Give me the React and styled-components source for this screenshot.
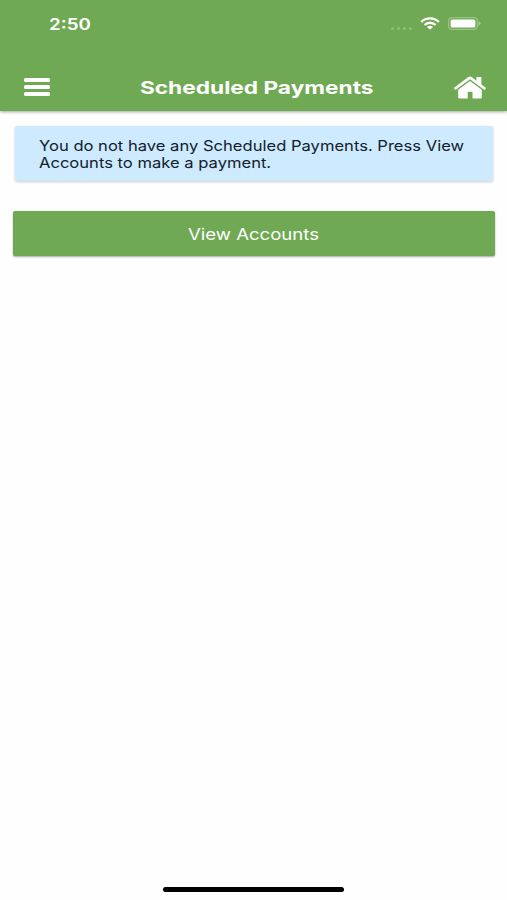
import React from 'react';
import styled, { createGlobalStyle } from 'styled-components';

const GlobalStyle = createGlobalStyle`
  * {
    box-sizing: border-box;
  }

  body {
    margin: 0;
    background: #fefefe;
    font-family: Inter, "Liberation Sans", sans-serif;
  }
`;

const App = () => (
  <Screen>
    <GlobalStyle />
    <Header>
      <StatusBar>
        <Time>
          <Wide $scale={1.17}>2:50</Wide>
        </Time>
        <StatusIcons>
          <Dots>
            <Dot />
            <Dot />
            <Dot />
            <Dot />
          </Dots>
          <WifiIcon />
          <BatteryIcon />
        </StatusIcons>
      </StatusBar>
      <Toolbar>
        <MenuButton type="button" aria-label="Menu">
          <MenuLine />
          <MenuLine />
          <MenuLine />
        </MenuButton>
        <Title>
          <Wide $scale={1.26} $origin="center">Scheduled Payments</Wide>
        </Title>
        <HomeButton type="button" aria-label="Home">
          <HomeIcon />
        </HomeButton>
      </Toolbar>
    </Header>
    <Content>
      <Notice>
        <Wide $scale={1.143}>
          You do not have any Scheduled Payments. Press View
          <br />
          Accounts to make a payment.
        </Wide>
      </Notice>
      <PrimaryButton type="button">
        <Wide $scale={1.16} $origin="center">View Accounts</Wide>
      </PrimaryButton>
    </Content>
    <HomeIndicator />
  </Screen>
);

const WifiIcon = () => (
  <svg width="20" height="13" viewBox="0 0 20 13" fill="none" stroke="#fff" strokeWidth="2.4">
    <path d="M1.2 5 C6 0.2 14 0.2 18.8 5" />
    <path d="M4.5 8 C7.6 5 12.4 5 15.5 8" />
    <path d="M10 12.6 L6.9 9.9 C8.6 8.4 11.4 8.4 13.1 9.9 Z" fill="#fff" stroke="none" />
  </svg>
);

const BatteryIcon = () => (
  <svg width="33" height="13" viewBox="0 0 33 13">
    <rect x="0.6" y="0.6" width="28.8" height="11.8" rx="3.4" fill="none" stroke="#fff" strokeOpacity="0.3" strokeWidth="1.2" />
    <rect x="2.6" y="2.4" width="24.8" height="8.2" rx="1.6" fill="#fff" />
    <path d="M30.6 4.3 Q32.6 5.2 32.6 6.5 Q32.6 7.8 30.6 8.7 Z" fill="#fff" fillOpacity="0.4" />
  </svg>
);

const HomeIcon = () => (
  <svg width="34" height="24" viewBox="0 0 34 24" fill="#fff">
    <path d="M0.8 12.1 L15.3 1.1 Q17 0 18.7 1.1 L23.4 4.7 V1 H28.4 V8.5 L33.2 12.1 L31.5 14 L17 3.3 L2.5 14 Z" />
    <path d="M17 5.1 L28.8 13.8 V21.2 Q28.8 22.5 27.5 22.5 H19.5 V15.8 H14.7 V22.5 H6.5 Q5.2 22.5 5.2 21.2 V13.8 Z" />
  </svg>
);

export default App;

const Screen = styled.main`
  display: flex;
  flex-direction: column;
  width: 507px;
  height: 900px;
  overflow: hidden;
`;

// Letters are drawn wider than Inter's own shapes
const Wide = styled.span`
  display: inline-block;
  white-space: nowrap;
  transform: scaleX(${({ $scale }) => $scale});
  transform-origin: ${({ $origin }) => $origin || 'left'};
`;

const Header = styled.header`
  height: 111px;
  background: #70a953;
  color: #fff;
  box-shadow: 0 1px 3px rgba(0, 0, 0, 0.35);
`;

const StatusBar = styled.div`
  display: flex;
  justify-content: space-between;
  height: 64px;
  padding: 14px 26px 0 49px;
`;

const Time = styled.div`
  font-size: 16px;
  font-weight: 600;
  line-height: 20px;
`;

const StatusIcons = styled.div`
  display: flex;
  align-items: center;
  gap: 8px;
  height: 19px;
`;

const Dots = styled.div`
  display: flex;
  gap: 3px;
  padding-top: 9px;
`;

const Dot = styled.span`
  width: 3px;
  height: 3px;
  border-radius: 50%;
  background: rgba(255, 255, 255, 0.22);
`;

const Toolbar = styled.div`
  display: grid;
  grid-template-columns: 60px 1fr 60px;
  align-items: center;
  height: 47px;
`;

const IconButton = styled.button`
  display: flex;
  padding: 0;
  border: 0;
  background: none;
`;

const MenuButton = styled(IconButton)`
  flex-direction: column;
  gap: 3px;
  margin: 0 0 1px 24px;
  width: 26px;
`;

const MenuLine = styled.span`
  width: 100%;
  height: 4px;
  border-radius: 1.5px;
  background: #fff;
`;

const HomeButton = styled(IconButton)`
  margin: 1px 0 0 6px;
`;

const Title = styled.h1`
  margin: 0;
  padding-left: 6px;
  font-size: 18px;
  font-weight: 700;
  line-height: 24px;
  text-align: center;
`;

const Content = styled.section`
  flex: 1;
  padding: 15px 12.5px 0 13px;
`;

const Notice = styled.div`
  height: 55px;
  margin: 0 2px;
  padding: 11px 24px;
  border-radius: 2px;
  background: #cdeaff;
  box-shadow: 0 1px 3px rgba(0, 0, 0, 0.2);
  color: #14212b;
  font-size: 14.5px;
  line-height: 17px;
`;

const PrimaryButton = styled.button`
  display: block;
  width: 100%;
  height: 45px;
  margin-top: 30px;
  padding: 0;
  border: 0;
  border-radius: 2px;
  background: #70a953;
  box-shadow: 0 1px 2px rgba(0, 0, 0, 0.35);
  color: #fff;
  font-family: inherit;
  font-size: 16px;
  line-height: 20px;
`;

const HomeIndicator = styled.div`
  width: 181px;
  height: 5px;
  margin: 0 auto 8px;
  border-radius: 3px;
  background: #000;
`;
